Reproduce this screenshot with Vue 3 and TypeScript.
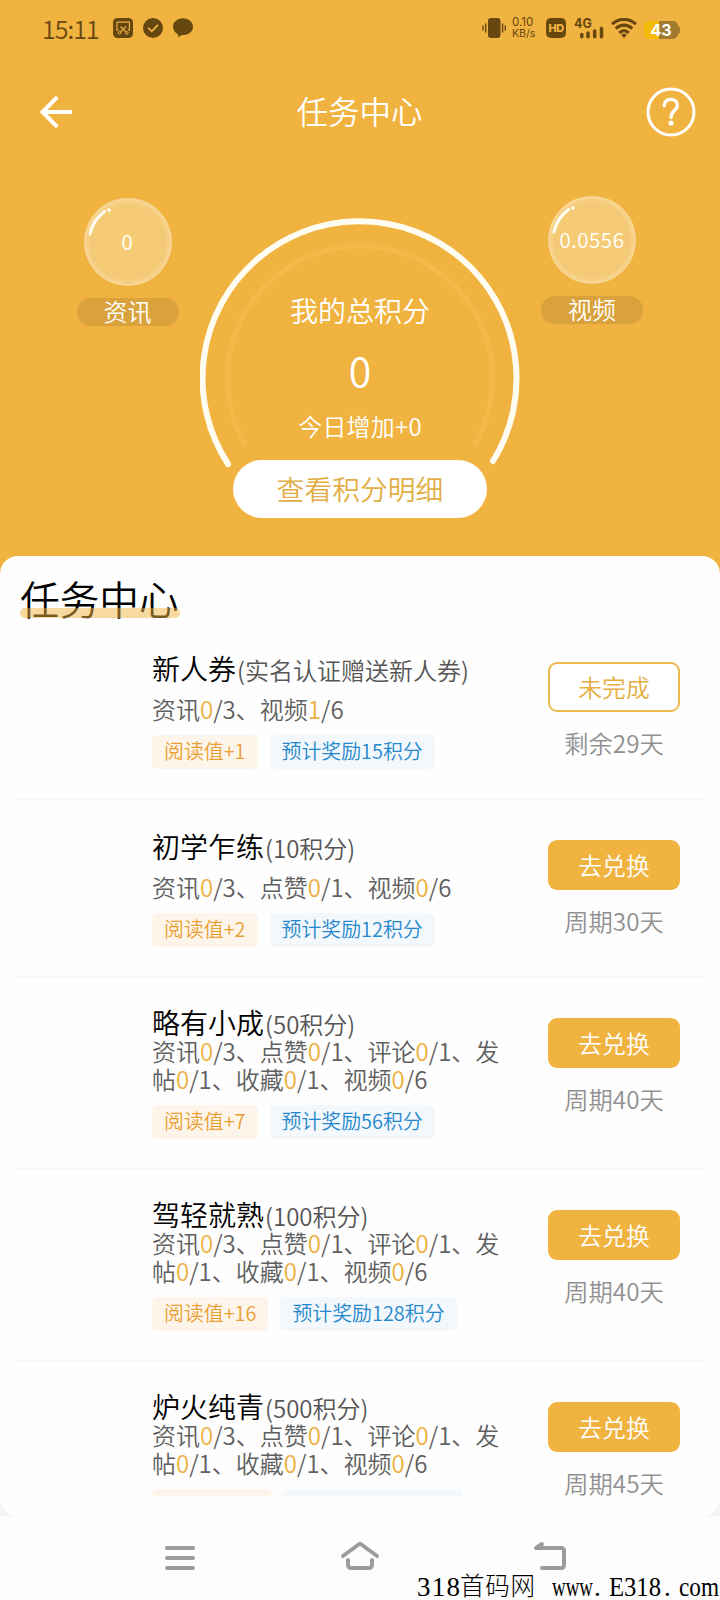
<script setup lang="ts">
interface Part {
  label: string
  done: number
  total: number
}

interface Task {
  name: string
  note: string
  parts: Part[]
  read: string
  reward: string
  action: string
  outlined?: boolean
  period: string
  compact?: boolean
}

const part = (label: string, total: number, done = 0): Part => ({ label, done, total })

const fullParts = (): Part[] => [
  part('资讯', 3),
  part('点赞', 1),
  part('评论', 1),
  part('发帖', 1),
  part('收藏', 1),
  part('视频', 6),
]

const tasks: Task[] = [
  {
    name: '新人券',
    note: '(实名认证赠送新人券)',
    parts: [part('资讯', 3), part('视频', 6, 1)],
    read: '阅读值+1',
    reward: '预计奖励15积分',
    action: '未完成',
    outlined: true,
    period: '剩余29天',
  },
  {
    name: '初学乍练',
    note: '(10积分)',
    parts: [part('资讯', 3), part('点赞', 1), part('视频', 6)],
    read: '阅读值+2',
    reward: '预计奖励12积分',
    action: '去兑换',
    period: '周期30天',
  },
  {
    name: '略有小成',
    note: '(50积分)',
    parts: fullParts(),
    read: '阅读值+7',
    reward: '预计奖励56积分',
    action: '去兑换',
    period: '周期40天',
    compact: true,
  },
  {
    name: '驾轻就熟',
    note: '(100积分)',
    parts: fullParts(),
    read: '阅读值+16',
    reward: '预计奖励128积分',
    action: '去兑换',
    period: '周期40天',
    compact: true,
  },
  {
    name: '炉火纯青',
    note: '(500积分)',
    parts: fullParts(),
    read: '',
    reward: '',
    action: '去兑换',
    period: '周期45天',
    compact: true,
  },
]

const bubbles = [
  { side: 'left', value: '0', label: '资讯' },
  { side: 'right', value: '0.0556', label: '视频' },
]
</script>

<template>
  <div class="page">
    <header class="status">
      <div class="status-left">
        <span class="time">15:11</span>
        <svg class="sicon" viewBox="0 0 20 20">
          <rect width="20" height="20" rx="4.5" fill="#674710" />
          <path d="M5.600 12.200H4V4.200h12.400v8h-1.600" fill="none" stroke="#e5ad45" stroke-width="1.200" />
          <path d="M7.500 8.500l5.500 5.500M12.900 8.500l-5.500 5.500" stroke="#e5ad45" stroke-width="1.300" />
          <circle cx="6.500" cy="14.900" r="1.300" fill="none" stroke="#e5ad45" />
          <circle cx="13.900" cy="14.900" r="1.300" fill="none" stroke="#e5ad45" />
        </svg>
        <svg class="sicon" viewBox="0 0 20 20">
          <circle cx="10" cy="10" r="10" fill="#674710" />
          <path d="M5.200 9.900l3.600 3.500 6.200-6.600" fill="none" stroke="#f1b340" stroke-width="1.700" />
        </svg>
        <svg class="sicon" viewBox="0 0 20 20">
          <path d="M10 0.300C4.300 0.300 0 4 0 8.700c0 3.500 2.100 6.100 5.100 7.500L4.900 19l4.300-2C15.500 17.200 20 13.600 20 8.700 20 4 15.700 0.300 10 0.300z" fill="#674710" />
        </svg>
      </div>
      <div class="status-right">
        <svg class="vibrate" viewBox="0 0 24 20">
          <rect x="6" width="12.500" height="20" rx="3" fill="#674710" />
          <path d="M1 8v4M3.700 6v8M20.600 6v8M23.300 8v4" stroke="#674710" stroke-width="1.400" stroke-linecap="round" />
        </svg>
        <span class="speed"><span class="rate">0.10</span><span>KB/s</span></span>
        <span class="hd">HD</span>
        <svg class="signal" viewBox="0 0 30 21">
          <text x="0" y="9.500" class="net">4G</text>
          <path d="M7.800 16.500v2.200M14 15v3.700M20.700 13v5.700M27.500 10.500v8.200" stroke="#674710" stroke-width="3.500" stroke-linecap="round" />
        </svg>
        <svg class="wifi" viewBox="0 0 26 20">
          <g fill="none" stroke="#674710" stroke-width="3.100">
            <path d="M1 6.200C8-0.300 18-0.300 25 6.200" />
            <path d="M4.700 10.600c5-4.600 11.600-4.600 16.600 0" />
            <path d="M8.300 14.800c2.900-2.600 6.500-2.600 9.400 0" />
          </g>
          <path d="M13 20l-3-3.300c1.800-1.400 4.200-1.400 6 0z" fill="#674710" />
        </svg>
        <span class="battery">43</span>
        <span class="battery-cap"></span>
      </div>
    </header>

    <nav class="bar">
      <svg class="back" viewBox="0 0 34 34">
        <path d="M17.200 2.200L2.500 17l14.700 14.800M2.500 17H32" fill="none" stroke="#fff" stroke-width="4" />
      </svg>
      <h1>任务中心</h1>
      <svg class="help" viewBox="0 0 50 50">
        <circle cx="25" cy="25" r="23" fill="none" stroke="#fff" stroke-width="3" />
        <path d="M18.200 18.700c0-4 2.900-6.300 6.600-6.300s6.600 2.400 6.600 6c0 4.700-6.300 5.500-6.300 11v1" fill="none" stroke="#fff" stroke-width="3.400" stroke-linecap="round" />
        <circle cx="25" cy="36" r="2.600" fill="#fff" />
      </svg>
    </nav>

    <section class="hero">
      <div v-for="b in bubbles" :key="b.label" class="bubble-col" :class="b.side">
        <div class="bubble">
          <svg class="shine" viewBox="0 0 88 88">
            <path d="M6 36C8 26.500 12.500 19.500 20.500 13.500" fill="none" stroke="#fffdf2" stroke-width="3" stroke-linecap="round" />
            <circle cx="25" cy="12" r="1.800" fill="#fffdf2" />
          </svg>
          <span class="bubble-value">{{ b.value }}</span>
        </div>
        <span class="bubble-label">{{ b.label }}</span>
      </div>

      <div class="gauge">
        <svg class="ring" viewBox="0 0 320 256">
          <path d="M28 246A157 157 0 1 1 293 243" fill="none" stroke="#fffdf2" stroke-width="6" stroke-linecap="round" />
          <path d="M46 228A132.500 132.500 0 1 1 274 228" fill="none" stroke="#f4b94b" stroke-width="5" />
        </svg>
        <p class="g-title">我的总积分</p>
        <p class="g-value">0</p>
        <p class="g-today">今日增加+0</p>
        <button class="detail">查看积分明细</button>
      </div>
    </section>

    <main class="card">
      <h2>任务中心</h2>
      <div class="list">
        <article v-for="t in tasks" :key="t.name" class="task" :class="{ compact: t.compact }">
          <div class="info">
            <h3>{{ t.name }}<small>{{ t.note }}</small></h3>
            <p class="desc"><template v-for="(p, i) in t.parts" :key="p.label"><template v-if="i">、</template>{{ p.label }}<b>{{ p.done }}</b>/{{ p.total }}</template></p>
            <div class="tags">
              <span class="tag read">{{ t.read }}</span>
              <span class="tag reward">{{ t.reward }}</span>
            </div>
          </div>
          <div class="side">
            <button class="action" :class="{ outlined: t.outlined }">{{ t.action }}</button>
            <span class="period">{{ t.period }}</span>
          </div>
        </article>
      </div>
    </main>

    <footer class="sysnav">
      <svg class="keys" viewBox="0 0 720 84">
        <g fill="none" stroke="#9c9c9c" stroke-width="4" stroke-linecap="round" stroke-linejoin="round">
          <path d="M167 32h26M167 42h26M167 52h26" />
          <path d="M343 40L360 27.500 377 40M348 44v4.500q0 3.500 3.500 3.500h17q3.500 0 3.500-3.500V44" />
          <path d="M542 28l-6 4h25q3 0 3 3v14q0 3-3 3h-19" />
        </g>
      </svg>
      <svg class="mark" viewBox="0 0 720 84">
        <text x="417" y="80" textLength="43" lengthAdjust="spacing">318</text>
        <text x="460" y="79" class="cjk" textLength="75" lengthAdjust="spacing">首码网</text>
        <text x="552" y="80" textLength="41" lengthAdjust="spacingAndGlyphs">www</text>
        <text x="594" y="80">.</text>
        <text x="609" y="80" textLength="52" lengthAdjust="spacingAndGlyphs">E318</text>
        <text x="664" y="80">.</text>
        <text x="679" y="80" textLength="40" lengthAdjust="spacingAndGlyphs">com</text>
      </svg>
    </footer>
  </div>
</template>

<style>
body {
  margin: 0;
}
</style>

<style scoped>
.page {
  width: 720px;
  height: 1600px;
  overflow: hidden;
  display: flex;
  flex-direction: column;
  background: linear-gradient(#f1b340 0 700px, #f5f5f6 700px);
  font-family: 'Noto Sans CJK SC', sans-serif;
  font-weight: 350;
  color: #fff;
}
h1, h2, h3, p {
  margin: 0;
  font-weight: inherit;
}
button {
  font: inherit;
  border: 0;
  padding: 0;
}
.status {
  height: 56px;
  box-sizing: border-box;
  padding: 0 40px 0 42px;
  display: flex;
  align-items: center;
  justify-content: space-between;
  color: #674710;
}
.status-left, .status-right {
  display: flex;
  align-items: center;
}
.time {
  width: 61px;
  margin-right: 10px;
  font-size: 25px;
  line-height: 54px;
  letter-spacing: -1px;
}
.sicon {
  width: 20px;
  height: 20px;
  margin-right: 10px;
}
.vibrate {
  width: 24px;
  height: 20px;
}
.speed {
  width: 26px;
  margin-left: 6px;
  display: flex;
  flex-direction: column;
  font: 10.600px/11px Inter, sans-serif;
  white-space: nowrap;
}
.rate {
  font-size: 11.600px;
}
.hd {
  width: 20px;
  height: 20px;
  margin-left: 8px;
  border-radius: 5px;
  background: #674710;
  color: #f1b340;
  font: 800 11px/20px Inter, sans-serif;
  letter-spacing: -0.500px;
  text-align: center;
}
.signal {
  width: 30px;
  height: 21px;
  margin-left: 8px;
  overflow: visible;
}
.net {
  font: 700 12.500px Inter, sans-serif;
  fill: #674710;
}
.wifi {
  width: 26px;
  height: 20px;
  margin-left: 7px;
}
.battery {
  width: 34px;
  height: 18px;
  margin: 3px 0 0 7px;
  border-radius: 5px;
  background: linear-gradient(90deg, #f3ba08 43%, #a17a30 43%);
  color: #fff;
  font: 700 16px/19px Inter, sans-serif;
  text-align: center;
}
.battery-cap {
  width: 2px;
  height: 8px;
  margin-top: 3px;
  border-radius: 0 2px 2px 0;
  background: #a17a30;
}
.bar {
  height: 112px;
  box-sizing: border-box;
  padding: 0 24px 0 40px;
  display: grid;
  grid-template-columns: 50px 1fr 50px;
  align-items: center;
}
.back {
  width: 34px;
  height: 34px;
}
.bar h1 {
  font-size: 31.500px;
  line-height: 48px;
  text-align: center;
  padding: 0 17px 4px 0;
}
.help {
  width: 50px;
  height: 50px;
}
.hero {
  height: 388px;
  display: grid;
  grid-template-columns: 200px 320px 200px;
  align-items: start;
}
.bubble-col {
  display: flex;
  flex-direction: column;
  align-items: center;
  grid-row: 1;
}
.left {
  grid-column: 1;
  padding: 30px 16px 0 71px;
  justify-self: center;
  width: 113px;
}
.right {
  grid-column: 3;
  padding: 28px 72px 0 16px;
  width: 112px;
}
.bubble {
  width: 88px;
  height: 88px;
  border-radius: 50%;
  background: radial-gradient(circle, #f5cb75 0 38%, #f5ca76 60%, #f8d695 70%);
  display: grid;
  place-items: center;
  font-size: 20.500px;
  position: relative;
}
.bubble-value {
  padding-bottom: 3px;
  letter-spacing: 0.500px;
}
.shine {
  position: absolute;
  inset: 0;
}
.bubble-label {
  width: 102px;
  height: 28px;
  margin-top: 12px;
  border-radius: 14px;
  background: #d9a23c;
  font-size: 24px;
  line-height: 25px;
  text-align: center;
}
.gauge {
  grid-column: 2;
  grid-row: 1;
  height: 388px;
  position: relative;
  display: flex;
  flex-direction: column;
  align-items: center;
}
.ring {
  position: absolute;
  left: 0;
  top: 50px;
  width: 320px;
  height: 256px;
}
.g-title {
  margin-top: 121px;
  font-size: 28px;
  line-height: 42px;
}
.g-value {
  margin-top: 8px;
  font-size: 41px;
  line-height: 60px;
}
.g-today {
  margin-top: 9px;
  font-size: 24px;
  line-height: 36px;
  letter-spacing: 0.200px;
}
.detail {
  width: 254px;
  height: 58px;
  margin-top: 16px;
  border-radius: 29px;
  background: #fff;
  color: #e2ae46;
  font-size: 27.800px;
  line-height: 54px;
  padding-bottom: 3px;
  position: relative;
}
.card {
  height: 960px;
  box-sizing: border-box;
  padding: 18px 16px 20px 18px;
  border-radius: 18px;
  background: #fefefe;
  display: flex;
  flex-direction: column;
  align-items: flex-start;
}
h2 {
  height: 48px;
  padding: 0 1px 0 2px;
  color: #000;
  font-size: 39.700px;
  line-height: 47px;
  position: relative;
}
h2::after {
  content: '';
  position: absolute;
  left: 2px;
  right: 0;
  top: 34px;
  height: 10px;
  border-radius: 5px;
  background: rgba(241, 179, 64, 0.500);
}
.list {
  width: 100%;
  height: 874px;
  overflow: hidden;
}
.task {
  height: 178px;
  box-sizing: border-box;
  border-bottom: 2px solid #f6f6f6;
  display: flex;
  justify-content: space-between;
}
.task.compact {
  height: 192px;
}
.info {
  width: 356px;
  margin-left: 134px;
  padding-top: 26px;
}
h3 {
  height: 41px;
  font-size: 28px;
  line-height: 40px;
  color: #000;
  white-space: nowrap;
}
small {
  margin-left: 1px;
  font-size: 24px;
  color: #555;
}
.desc {
  font-size: 24px;
  line-height: 40px;
  color: #606060;
}
.desc b {
  font-weight: inherit;
  color: #edb040;
}
.compact .info {
  padding-top: 30px;
}
.compact h3 {
  height: 29px;
  line-height: 28px;
}
.compact .desc {
  line-height: 28px;
}
.tags {
  margin-top: 6px;
  display: flex;
  gap: 12px;
}
.compact .tags {
  margin-top: 12px;
}
.tag {
  height: 34px;
  box-sizing: border-box;
  padding: 0 12px;
  border-radius: 5px;
  font-size: 19.900px;
  line-height: 32px;
  white-space: nowrap;
}
.read {
  background: #fef5ea;
  color: #e99f33;
}
.reward {
  background: #f3f8fd;
  color: #2387cc;
}
.read:empty {
  width: 120px;
}
.reward:empty {
  width: 179px;
}
.side {
  width: 132px;
  margin-right: 24px;
  padding-top: 40px;
  display: flex;
  flex-direction: column;
  align-items: center;
}
.action {
  width: 132px;
  height: 50px;
  box-sizing: border-box;
  border-radius: 9px;
  background: #f1b340;
  color: #fff;
  font-size: 23.800px;
  line-height: 48px;
}
.outlined {
  border: 2px solid #ecb850;
  background: #fff;
  color: #e6ae42;
  line-height: 44px;
}
.period {
  margin-top: 13px;
  font-size: 24.300px;
  line-height: 36px;
  color: #919191;
  white-space: nowrap;
}
.sysnav {
  height: 84px;
  background: #fdfdfd;
  position: relative;
}
.keys, .mark {
  position: absolute;
  inset: 0;
  width: 720px;
  height: 84px;
}
.mark text {
  font: 400 27px 'Liberation Serif', serif;
  fill: #000;
}
.mark .cjk {
  font: 300 24.500px 'Noto Sans CJK SC', serif;
}
</style>
